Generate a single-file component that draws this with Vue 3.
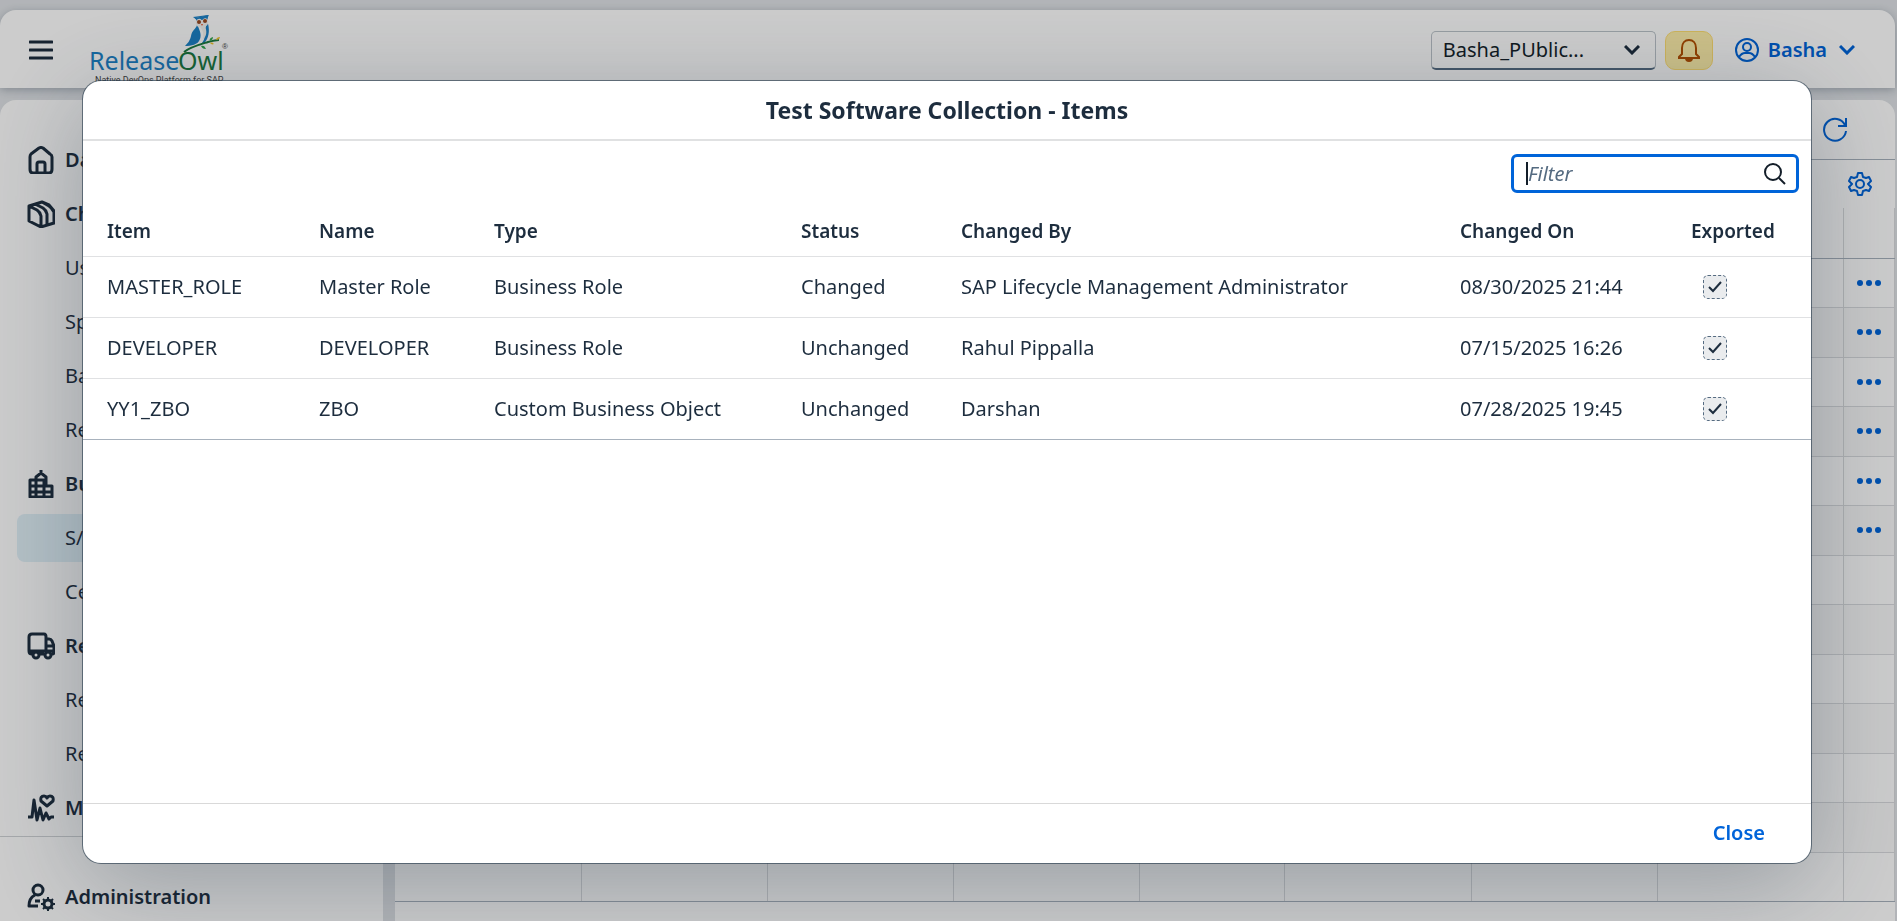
<script setup>
import { ref } from 'vue'

const nav = [
  { label: 'Dash', icon: 'home' },
  { label: 'Change', icon: 'box' },
  { label: 'Users' },
  { label: 'Sprint' },
  { label: 'Backlog' },
  { label: 'Repos' },
  { label: 'Build', icon: 'building' },
  { label: 'S/4', selected: true },
  { label: 'Certs' },
  { label: 'Release', icon: 'truck' },
  { label: 'Releases' },
  { label: 'Reports' },
  { label: 'Monitor', icon: 'pulse' }
]

const columns = ['Item', 'Name', 'Type', 'Status', 'Changed By', 'Changed On']

const items = [
  ['MASTER_ROLE', 'Master Role', 'Business Role', 'Changed', 'SAP Lifecycle Management Administrator', '08/30/2025 21:44'],
  ['DEVELOPER', 'DEVELOPER', 'Business Role', 'Unchanged', 'Rahul Pippalla', '07/15/2025 16:26'],
  ['YY1_ZBO', 'ZBO', 'Custom Business Object', 'Unchanged', 'Darshan', '07/28/2025 19:45']
]

const filter = ref('')
</script>

<template>
  <div class="app">
    <header class="shell">
      <button class="plain menu" aria-label="Menu">
        <svg width="24" height="24" viewBox="0 0 24 24"><path d="M1 4h22M1 12h22M1 20h22" stroke-linecap="round" /></svg>
      </button>
      <svg class="logo" width="142" height="70" viewBox="0 0 142 70" role="img" aria-label="ReleaseOwl">
        <path d="M102 3l4 3v5c-1 4-5 5-6 11-1 4-2 6-6 10 6 0 13-1 15-7 2-5-1-10-3-15l-1-6 11-2v4c2 6 3 13 0 19-1 3-4 5-8 7 5-4 7-9 5-15l3-7 1-9z" fill="#1c81c6" />
        <path d="M104 4l14-3-2 4-10 2z" fill="#1c81c6" />
        <path d="M105 7c2-3 5-3 6 0 1-3 4-4 6-1 1 4-1 6-3 6 2 5 2 10-2 13 1-5 0-9-3-12-3 0-4-2-4-6z" fill="#f4f3ef" />
        <circle cx="108" cy="8" r="2" fill="#9a4b22" />
        <circle cx="114" cy="7" r="2" fill="#9a4b22" />
        <path d="M110 10h2l-1 2z" fill="#e0562c" />
        <path d="M93 38c6-5 14-7 24-10 4-1 8-2 11-2" fill="none" stroke="#1a7a3f" stroke-width="2" />
        <path d="M119 27c-1-2 0-3 3-4 0 2-1 3-3 4zM110 32c2-1 4 0 5 3-3 0-4-1-5-3z" fill="#2fa84e" />
        <path d="M125 26c0-2 2-3 4-3 0 2-2 3-4 3zM119 29c2-1 3 0 4 1-2 1-3 0-4-1z" fill="#f0c52e" />
        <text x="-2" y="56" class="brand blue">Release</text>
        <text x="87" y="56" class="brand green">Owl</text>
        <text x="131" y="35" class="reg">®</text>
        <text x="4" y="69" class="tag">Native DevOps Platform for SAP</text>
      </svg>
      <div class="grow"></div>
      <div class="project">
        <select aria-label="Project"><option>Basha_PUblic...</option></select>
        <svg width="16" height="10" viewBox="0 0 16 10"><path d="M1 1l7 7 7-7" /></svg>
      </div>
      <button class="bell" aria-label="Notifications">
        <svg width="24" height="24" viewBox="0 0 24 24">
          <path d="M2 20h20v-1l-3-3V10c0-5-3-8-7-8s-7 3-7 8v6l-3 3z" />
          <path class="fill" d="M9 20h6c0 2-1 3-3 3s-3-1-3-3z" />
        </svg>
      </button>
      <button class="plain user">
        <svg width="26" height="26" viewBox="0 0 26 26">
          <circle cx="13" cy="13" r="11" /><circle cx="13" cy="10" r="4" /><path d="M5 20c2-3 4-4 6-4h4c2 0 4 1 6 4" />
        </svg>
        <span>Basha</span>
        <svg width="16" height="10" viewBox="0 0 16 10"><path d="M1 1l7 7 7-7" /></svg>
      </button>
    </header>

    <div class="body">
      <aside class="side">
        <nav>
          <a v-for="n in nav" :key="n.label" href="#" :class="{ group: n.icon, selected: n.selected }">
            <span class="ico">
              <svg v-if="n.icon === 'home'" width="28" height="28" viewBox="0 0 28 28"><path d="M3 11Q3 9 4 8l8-6q2-1 4 0l7 6q2 1 2 3v12q0 4-3 4H6q-3 0-3-4zM10 27V18q0-2 2-2h4q2 0 2 2v9" /></svg>
              <svg v-else-if="n.icon === 'box'" width="28" height="28" viewBox="0 0 28 28"><path d="M2 6l13-4 7 3 5 6v12l-13 4-12-6zM2 6l8 4q3 2 4 6v11M8 4l8 4q3 2 4 6v10M15 2l7 4q3 2 5 6" /></svg>
              <svg v-else-if="n.icon === 'building'" width="28" height="28" viewBox="0 0 28 28"><path d="M14 0v4M3 27V10h6V7l5-4 5 4v9h6v11zM9 10v17M17 11v16M9 10h10M3 16h22M3 22h22" /></svg>
              <svg v-else-if="n.icon === 'truck'" width="28" height="28" viewBox="0 0 28 28"><path d="M6 22H5q-3 0-3-3V5q0-3 3-3h12q2 0 2 3v14M19 7h3q2 0 3 2l2 5v6q0 2-2 2M12 22h5M19 14h8M3 19h24" /><circle cx="9" cy="23" r="3" /><circle cx="21" cy="23" r="3" /></svg>
              <svg v-else-if="n.icon === 'pulse'" width="28" height="28" viewBox="0 0 28 28"><path d="M1 23h4L7 6l3 20 3-12 3 12 3-7 3 6 2-2h3M20 12l-6-5q-1-5 3-5 2 0 3 2 1-2 3-2 4 0 3 5z" /></svg>
            </span>
            <span>{{ n.label }}</span>
          </a>
        </nav>
        <div class="fixed">
          <a href="#" class="group">
            <span class="ico">
              <svg width="28" height="28" viewBox="0 0 28 28">
                <circle cx="11" cy="7" r="5" /><path d="M11 23H2q0-8 6-11M8 18h5" />
                <circle cx="21" cy="21" r="4" /><path d="M21 14v3M21 25v3M14 21h3M25 21h3M16 16l2 2M24 24l2 2M26 16l-2 2M18 24l-2 2" stroke-width="2" />
              </svg>
            </span>
            <span>Administration</span>
          </a>
        </div>
      </aside>

      <main class="main">
        <div class="title-bar">
          <button class="plain" aria-label="Refresh">
            <svg width="26" height="26" viewBox="0 0 26 26"><path d="M24 2v8h-8M23 9A11 11 0 1 0 24 15" /></svg>
          </button>
        </div>
        <div class="tool-bar">
          <button class="plain" aria-label="Settings">
            <svg width="24" height="24" viewBox="0 0 24 24">
              <path d="M10 1h4l1 4 3 1 3-1 2 4-3 3 3 3-2 4-3-1-3 1-1 4h-4l-1-4-3-1-3 1-2-4 3-3-3-3 2-4 3 1 3-1z" stroke-linejoin="round" />
              <circle cx="12" cy="12" r="4" />
            </svg>
          </button>
        </div>
        <table class="grid" aria-label="Collections">
          <colgroup><col v-for="c in 9" :key="c" :class="'g' + c" /></colgroup>
          <thead><tr><th v-for="c in 9" :key="c"></th></tr></thead>
          <tbody>
            <tr v-for="r in 13" :key="r">
              <td v-for="c in 8" :key="c"></td>
              <td>
                <button v-if="r < 7" class="plain" aria-label="More actions">
                  <svg class="dots" width="24" height="6" viewBox="0 0 24 6"><circle cx="3" cy="3" r="3" /><circle cx="12" cy="3" r="3" /><circle cx="21" cy="3" r="3" /></svg>
                </button>
              </td>
            </tr>
          </tbody>
        </table>
      </main>
    </div>

    <div class="overlay">
      <section class="dialog" role="dialog" aria-modal="true" aria-labelledby="dialog-title">
        <h1 id="dialog-title">Test Software Collection - Items</h1>
        <div class="search-row">
          <div class="search">
            <span class="caret"></span>
            <input v-model="filter" type="text" placeholder="Filter" aria-label="Filter" />
            <svg width="24" height="24" viewBox="0 0 24 24"><circle cx="10" cy="10" r="8" /><path d="M16 16l6 6" /></svg>
          </div>
        </div>
        <table class="items">
          <colgroup><col v-for="c in 7" :key="c" :class="'c' + c" /></colgroup>
          <thead>
            <tr>
              <th v-for="c in columns" :key="c" scope="col">{{ c }}</th>
              <th scope="col">Exported</th>
            </tr>
          </thead>
          <tbody>
            <tr v-for="row in items" :key="row[0]">
              <td v-for="(cell, i) in row" :key="i">{{ cell }}</td>
              <td class="check">
                <label>
                  <input type="checkbox" checked disabled :aria-label="'Exported ' + row[0]" />
                  <svg width="14" height="12" viewBox="0 0 14 12"><path d="M1 6l4 4 8-9" /></svg>
                </label>
              </td>
            </tr>
          </tbody>
        </table>
        <footer><button class="plain close">Close</button></footer>
      </section>
    </div>
  </div>
</template>

<style>
body {
  margin: 0;
  overflow: hidden;
}
</style>

<style scoped>
* {
  box-sizing: border-box;
}

.app {
  height: 100vh;
  padding: 10px 2px 0 0;
  display: flex;
  flex-direction: column;
  gap: 12px;
  overflow: hidden;
  background: #dfe2e6;
  color: #1d2d3e;
  font: 20px/24px "Noto Sans", sans-serif;
}

svg {
  flex: none;
  fill: none;
  stroke: currentColor;
  stroke-width: 2;
}

button,
select,
input {
  font: inherit;
  color: inherit;
}

.plain {
  display: flex;
  align-items: center;
  padding: 0;
  border: 0;
  background: none;
  color: #0064d9;
}

.grow {
  flex: 1;
}

.shell {
  flex: none;
  height: 78px;
  display: flex;
  align-items: center;
  padding: 2px 40px 0 29px;
  border-radius: 16px 16px 0 0;
  background: #fff;
  box-shadow: 0 2px 8px rgba(34, 53, 72, 0.3);
}

.menu {
  color: #1d2d3e;
}

.menu svg {
  stroke-width: 3;
}

.logo {
  align-self: flex-start;
  margin: 2px 0 0 38px;
  stroke: none;
  overflow: visible;
}

.brand {
  font: 25px "Noto Sans", sans-serif;
}

.blue {
  fill: #1c81c6;
}

.green {
  fill: #1a7a3f;
}

.reg {
  font: 8px "Liberation Sans", sans-serif;
  fill: #444;
}

.tag {
  font: 9px Roboto, sans-serif;
  fill: #444;
}

.project {
  width: 225px;
  height: 39px;
  margin-right: 9px;
  display: grid;
  align-items: center;
}

.project > * {
  grid-area: 1 / 1;
}

.project select {
  width: 100%;
  height: 100%;
  padding: 0 48px 0 11px;
  appearance: none;
  border: 1px solid #bcc3ca;
  border-bottom: 2px solid #556b81;
  border-radius: 5px;
  background: #fff;
  color: #131e29;
}

.project svg {
  justify-self: end;
  margin-right: 16px;
  pointer-events: none;
}

.project svg,
.user svg:last-child {
  stroke-width: 3;
}

.bell {
  width: 48px;
  height: 39px;
  display: flex;
  align-items: center;
  justify-content: center;
  padding: 0;
  border: 1px solid #ffdf72;
  border-radius: 10px;
  background: #fff0aa;
  color: #b44f00;
}

.fill,
.dots {
  fill: currentColor;
}

.user {
  margin-left: 21px;
  gap: 8px;
  font-weight: 600;
}

.user svg:last-child {
  margin-left: 4px;
}

.body {
  flex: 1;
  min-height: 0;
  display: flex;
  gap: 12px;
}

.side {
  width: 383px;
  display: flex;
  flex-direction: column;
  border-radius: 16px 0 0 0;
  background: #fff;
}

nav {
  flex: 1;
  display: flex;
  flex-direction: column;
  gap: 6px;
  padding: 36px 16px 0 17px;
}

.side a {
  height: 48px;
  display: flex;
  align-items: center;
  gap: 10px;
  border-radius: 8px;
  color: inherit;
  text-decoration: none;
}

.side a.group {
  font-weight: 600;
}

.side a.selected {
  background: #e1f1f8;
}

.ico {
  width: 28px;
  height: 28px;
  margin-left: 10px;
}

.ico svg {
  display: block;
  stroke-width: 3;
  stroke-linejoin: round;
}

.fixed {
  height: 85px;
  padding: 36px 16px 0 17px;
  border-top: 1px solid #d0d3d6;
}

.main {
  flex: 1;
  border-radius: 0 16px 0 0;
  background: #fff;
}

.title-bar {
  height: 60px;
  display: flex;
  align-items: center;
  justify-content: flex-end;
  padding: 0 47px 1px 0;
  border-bottom: 1px solid #a8b2bd;
}

.tool-bar {
  height: 48px;
  display: flex;
  align-items: center;
  justify-content: flex-end;
  padding-right: 23px;
}

.grid {
  width: 100%;
  table-layout: fixed;
  border-collapse: collapse;
}

.grid thead tr {
  height: 50px;
}

.grid tbody tr:nth-child(odd) {
  height: 49px;
}

.grid tbody tr {
  height: 50px;
}

.grid tbody tr:nth-child(even) {
  background: #fafafa;
}

.grid th {
  border-bottom: 1px solid #a8b2bd;
}

.grid th,
.grid td {
  padding: 0;
  border-right: 1px solid #d9dbde;
}

.grid td {
  border-bottom: 1px solid #d9dbde;
}

.grid tr:last-child td {
  border-bottom-color: #a8b2bd;
}

.grid td button {
  margin: 0 auto;
}

.g5 {
  width: 145px;
}

.g9 {
  width: 51px;
}

.dots {
  stroke: none;
}

.overlay {
  position: fixed;
  inset: 0;
  display: flex;
  background: rgba(0, 0, 0, 0.2);
}

.dialog {
  flex: 1;
  margin: 81px 86px 58px 83px;
  display: flex;
  flex-direction: column;
  border-radius: 18px;
  background: #fff;
  box-shadow: 0 0 0 1px rgba(34, 53, 72, 0.6), 0 20px 100px rgba(34, 53, 72, 0.32);
}

h1 {
  flex: none;
  height: 60px;
  margin: 0;
  border-bottom: 2px solid #e0e1e2;
  font-size: 23px;
  line-height: 58px;
  font-weight: 700;
  text-align: center;
}

.search-row {
  height: 64px;
  display: flex;
  justify-content: flex-end;
  padding: 13px 12px 0;
}

.search {
  width: 288px;
  height: 39px;
  display: flex;
  align-items: center;
  padding: 0 9px 0 12px;
  border: 3px solid #0064d9;
  border-radius: 6px;
  color: #131e29;
}

.caret {
  width: 2px;
  height: 23px;
  background: #131e29;
}

.search input {
  flex: 1;
  min-width: 0;
  padding: 0;
  border: 0;
  outline: 0;
  background: none;
}

.search input::placeholder {
  color: #556b81;
  opacity: 1;
  font-style: italic;
}

.items {
  width: 100%;
  table-layout: fixed;
  border-collapse: collapse;
}

th,
.items td {
  text-align: left;
  white-space: nowrap;
}

.items th {
  height: 51px;
  padding: 2px 0 0 24px;
  border-bottom: 1px solid #e0e1e3;
  font-size: 19px;
  font-weight: 600;
}

.items td {
  height: 61px;
  padding: 1px 0 0 24px;
  border-bottom: 1px solid #e0e1e3;
}

.items tr:last-child td {
  border-bottom-color: #a8b2bd;
}

.c1 { width: 212px; }
.c2 { width: 175px; }
.c3 { width: 307px; }
.c4 { width: 160px; }
.c6 { width: 231px; }
.c7 { width: 144px; }

.check label {
  display: grid;
  place-items: center;
  width: 24px;
  height: 24px;
  margin-left: 12px;
}

.check label > * {
  grid-area: 1 / 1;
}

.check input {
  width: 24px;
  height: 24px;
  margin: 0;
  appearance: none;
  border: 1px dashed #556b81;
  border-radius: 5px;
  background: #eaecee;
}

footer {
  height: 60px;
  margin-top: auto;
  display: flex;
  align-items: center;
  justify-content: flex-end;
  padding: 0 46px 2px 0;
  border-top: 1px solid #d9d9d9;
}

.close {
  font-weight: 600;
}
</style>
